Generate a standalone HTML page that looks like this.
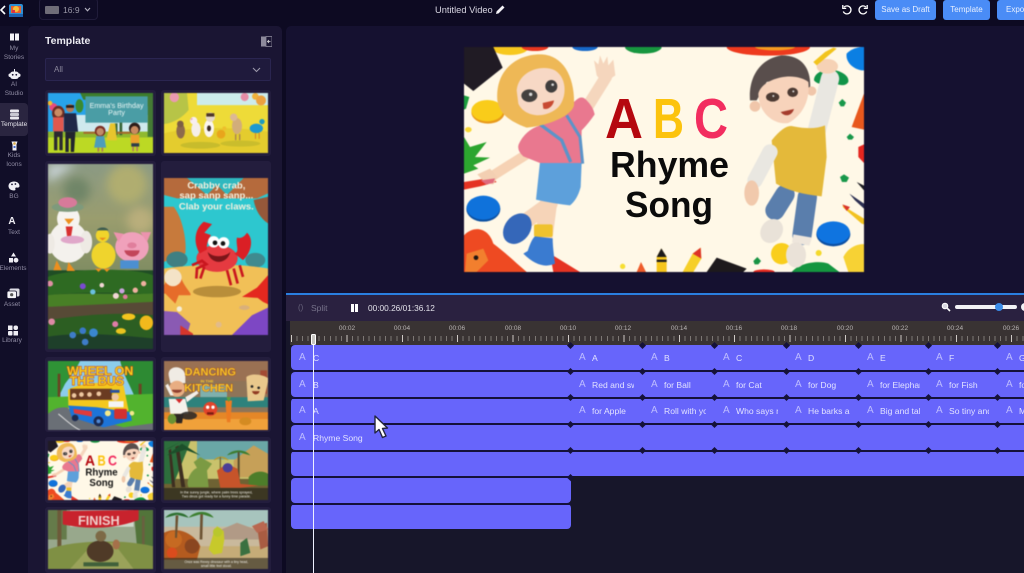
<!DOCTYPE html>
<html lang="en"><head><meta charset="utf-8"><title>Untitled Video</title>
<style>
*{box-sizing:border-box;margin:0;padding:0}
html,body{width:1024px;height:573px;overflow:hidden;background:#0d0a22;font-family:"Liberation Sans",sans-serif}
.a{position:absolute}
#root{position:relative;width:1024px;height:573px;overflow:hidden;background:#0d0a22}
.t{position:absolute;white-space:nowrap}
.nav{position:absolute;left:0;width:28px;text-align:center;color:#8f8ba3;font-size:6.5px;line-height:9.3px}
.btn{position:absolute;top:0;height:20px;background:#4a8cf6;border-radius:3px;color:#e8f0ff;font-size:8px;line-height:20px;text-align:center;overflow:hidden}
.card{position:absolute;background:#231d3d;border-radius:3px}
.th{position:absolute;display:block;overflow:hidden;filter:blur(.45px)}
.row{position:absolute;left:291px;height:25px;background:#6765fb;border-radius:4px 0 0 4px}
.ln{position:absolute;height:2px;background:#15123a}
.dm{position:absolute;width:5px;height:5px;margin:.5px;background:#15123a;transform:rotate(45deg)}
.ai{position:absolute;color:#bdbcff;font-size:10px;line-height:12px;font-weight:400}
.lb{position:absolute;color:#e2e2ff;font-size:8.6px;line-height:12px;white-space:nowrap;overflow:hidden}
.rl{position:absolute;top:324px;color:#b9b5b4;font-size:6.5px;line-height:9px;width:24px;text-align:center}
</style></head><body><div id="root">

<svg width="0" height="0" style="position:absolute"><defs>
<symbol id="abcart" viewBox="12 20 1200 675" preserveAspectRatio="none">
<rect x="12" y="20" width="1200" height="675" fill="#fff8e7"/>
<ellipse cx="150" cy="22" rx="55" ry="22" fill="#f7c81e"/><ellipse cx="225" cy="20" rx="40" ry="12" fill="#e8371f"/>
<ellipse cx="375" cy="20" rx="38" ry="12" fill="#1668c8"/><ellipse cx="550" cy="20" rx="55" ry="20" fill="#17963f"/>
<ellipse cx="925" cy="20" rx="125" ry="26" fill="#ee3a1e"/><ellipse cx="945" cy="20" rx="60" ry="10" fill="#f59c20"/>
<path d="M12 20H100L128 82L40 152L12 130Z" fill="#201b24"/>
<ellipse cx="84" cy="216" rx="50" ry="34" fill="#e89a1c"/><ellipse cx="82" cy="211" rx="48" ry="32" fill="#f9cc1a"/>
<path d="M12 165L28 170L18 205L12 208Z" fill="#1b9e3e"/><ellipse cx="25" cy="268" rx="10" ry="8" fill="#f7d634"/>
<path d="M12 290L30 320L80 305L45 350L90 352L40 375L55 385L12 400Z" fill="#2ca52f"/>
<path d="M12 425L95 412L110 425L60 438L12 448Z" fill="#e53322"/>
<ellipse cx="70" cy="506" rx="51" ry="38" fill="#0b4fa0"/><ellipse cx="70" cy="502" rx="50" ry="36" fill="#0f72db"/>
<path d="M12 585C40 555 85 560 100 610C140 640 170 670 200 695H12Z" fill="#ee4a22"/>
<path d="M20 640L70 625L85 660L50 695H15Z" fill="#f27f2e"/><circle cx="48" cy="652" r="7" fill="#1f1613"/>
<path d="M270 640L360 695H280Z" fill="#e53322"/>
<path d="M530 695L543 665L558 695Z" fill="#ee5b2a"/><circle cx="488" cy="678" r="8" fill="#f7df32"/>
<path d="M590 695V650L604 624L620 650V695Z" fill="#f6c51b"/><path d="M590 650L604 624L620 650Z" fill="#1c1a1c"/><rect x="590" y="658" width="30" height="7" fill="#1c1a1c"/>
<path d="M668 695L698 640L722 622L724 655L700 695Z" fill="#f6cf27"/><path d="M698 640L722 622L724 655Z" fill="#dd3327"/>
<path d="M740 695L770 652L860 685L850 695Z" fill="#1d191c"/>
<ellipse cx="912" cy="695" rx="32" ry="8" fill="#e6291e"/>
<path d="M995 695C1020 665 1080 660 1105 670L1138 695Z" fill="#14963f"/>
<path d="M1150 650C1170 610 1212 610 1212 612V695H1165Z" fill="#f7d234"/>
<circle cx="965" cy="640" r="32" fill="#f9ce1c"/><circle cx="1076" cy="638" r="9" fill="#f4d92b"/>
<path d="M880 662L892 650L903 662L895 672L884 672Z" fill="#199444"/>
<ellipse cx="1120" cy="582" rx="51" ry="36" fill="#0c4fa3"/><ellipse cx="1120" cy="577" rx="50" ry="34" fill="#0f74e0"/>
<path d="M1147 495L1212 535V552L1205 550L1150 502Z" fill="#f2c21f"/><path d="M1147 492L1170 500L1160 512Z" fill="#d9332a"/>
<path d="M1168 460L1212 490V505L1185 480Z" fill="#2c2f52"/><path d="M1190 425L1212 436V450Z" fill="#1c1c22"/>
<path d="M1140 410L1152 402L1167 412L1160 425H1146Z" fill="#18984a"/><path d="M1160 290L1170 280L1182 290L1176 298H1165Z" fill="#18984a"/><path d="M1136 187L1147 176L1158 187L1152 198H1142Z" fill="#18984a"/>
<path d="M1195 320L1212 312V368L1195 350Z" fill="#e5261f"/>
<path d="M1175 260L1212 160V268Z" fill="#e8581d"/>
<path d="M1160 40C1180 18 1212 20 1212 20V90C1190 92 1155 70 1160 40Z" fill="#0b7fe3"/>
<path d="M1062 120C1062 100 1085 90 1100 88C1125 85 1170 100 1165 125C1155 140 1140 135 1110 125C1090 130 1075 135 1062 120Z" fill="#119448"/>
<!-- girl -->
<g fill="none" stroke-linecap="round">
<path d="M195 345L95 408" stroke="#f6d2b4" stroke-width="30"/>
<path d="M385 195L438 110" stroke="#f5d6bd" stroke-width="36"/>
<path d="M270 490L180 555" stroke="#f6d4b8" stroke-width="46"/>
<path d="M265 490L252 590" stroke="#f6d4b8" stroke-width="52"/>
</g>
<path d="M410 105L402 60L415 72L420 45L430 70L442 48L445 75L460 58L466 105L430 130Z" fill="#f5d6bd"/>
<path d="M52 402L90 385L112 410L100 432L78 430Z" fill="#f3cfb2"/><path d="M62 420L105 414L100 428L78 432Z" fill="#e06a7d"/>
<ellipse cx="172" cy="565" rx="38" ry="50" transform="rotate(38 172 565)" fill="#3567b9"/>
<rect x="222" y="552" width="56" height="38" rx="6" fill="#efc22e"/>
<path d="M203 632Q215 595 225 588L278 594Q278 620 285 670Q240 690 190 640Z" fill="#3a7bd0"/>
<path d="M240 365H365L362 440Q352 478 330 495Q280 490 228 478Z" fill="#5da0db"/>
<path d="M240 255Q300 225 350 178Q365 165 378 178Q400 200 404 222Q385 250 365 270L363 368H240L190 348Q170 330 176 312Q195 270 240 255Z" fill="#e9788f"/>
<path d="M240 252L305 300L332 365" fill="none" stroke="#5b94c9" stroke-width="10"/><path d="M320 225L360 290L368 370" fill="none" stroke="#5b94c9" stroke-width="9"/>
<path d="M112 180C105 90 170 40 245 42C310 45 345 110 342 195C335 225 270 255 200 262C140 240 118 215 112 180Z" fill="#eeb856"/>
<path d="M170 150C175 95 240 70 285 90C325 115 320 180 290 205C245 240 190 225 175 190Z" fill="#f7d8c5"/>
<ellipse cx="208" cy="166" rx="24" ry="19" fill="#43403f"/><ellipse cx="274" cy="138" rx="18" ry="19" fill="#3f3d3d"/><circle cx="212" cy="162" r="5" fill="#d9d9d9"/><circle cx="278" cy="133" r="4" fill="#d9d9d9"/>
<path d="M248 188L282 180C280 198 262 210 250 205Z" fill="#c84a33"/>
<!-- boy -->
<path d="M1068 280L1110 115" fill="none" stroke="#e9e7e1" stroke-width="55" stroke-linecap="round"/>
<ellipse cx="1102" cy="78" rx="32" ry="22" fill="#f6d2b5"/>
<path d="M1060 65L1095 35L1120 22L1130 25L1098 52L1070 75Z" fill="#f2c41c"/>
<path d="M975 462L945 510" fill="none" stroke="#5a7eac" stroke-width="58" stroke-linecap="round"/>
<path d="M1042 470L1026 585" fill="none" stroke="#5a7eac" stroke-width="58" stroke-linecap="round"/>
<path d="M1000 582L1056 592L1048 616L996 606Z" fill="#eee6dc"/>
<ellipse cx="1008" cy="644" rx="30" ry="38" fill="#eae2d8"/>
<ellipse cx="935" cy="572" rx="32" ry="38" transform="rotate(35 935 572)" fill="#e9e2d8"/>
<path d="M935 300Q975 250 1000 258Q1060 270 1095 255L1100 350L1085 468Q1000 460 948 430Z" fill="#e4b93a"/>
<path d="M930 335L885 420" fill="none" stroke="#e9e7e1" stroke-width="46" stroke-linecap="round"/>
<ellipse cx="875" cy="458" rx="22" ry="38" fill="#f1c9ac"/>
<path d="M870 180C865 110 900 55 965 45C1035 45 1055 95 1050 150L1000 110L920 125L890 180Z" fill="#594e4c"/>
<circle cx="885" cy="198" r="16" fill="#f0c6aa"/><circle cx="1055" cy="152" r="14" fill="#f0c6aa"/>
<path d="M895 160C905 115 1000 90 1045 125C1050 170 1035 220 985 248C945 255 895 220 895 160Z" fill="#f7d3bb"/>
<ellipse cx="938" cy="170" rx="20" ry="14" fill="#4b3a33"/><ellipse cx="998" cy="156" rx="16" ry="14" fill="#4b3a33"/><circle cx="940" cy="167" r="3" fill="#ddd"/><circle cx="1000" cy="153" r="3" fill="#ddd"/>
<path d="M962 215L1002 206C996 226 975 232 962 215Z" fill="#a53b2c"/>
</symbol>
</defs></svg>

<!-- shell -->
<div class="a" style="left:0;top:26px;width:29px;height:547px;background:#110e28"></div>
<div class="a" style="left:28px;top:26px;width:254px;height:547px;background:#1a1533;border-radius:5px 5px 0 0"></div>
<div class="a" style="left:286px;top:26px;width:738px;height:268px;background:#151130;border-radius:5px 0 0 0"></div>

<!-- top bar -->
<svg class="a" style="left:0;top:5px" width="8" height="10" viewBox="0 0 8 10"><path d="M5 1L1 5L5 9" fill="none" stroke="#fff" stroke-width="1.6"/></svg>
<svg class="a" style="left:8px;top:3px" width="16" height="15" viewBox="0 0 16 15"><rect x="1" y="1" width="14" height="13" rx="2" fill="#2e8fd4"/><path d="M3 3h10v7H3z" fill="#e8622e"/><circle cx="8" cy="6" r="3" fill="#f7c03a"/><path d="M1 11h14v3H1z" fill="#1d62b0"/><path d="M4 7h3v3H4z" fill="#d8324a"/></svg>
<div class="a" style="left:39px;top:-2px;width:59px;height:22px;border:1px solid #201c3a;border-radius:4px;background:#0f0c26"></div>
<div class="a" style="left:45px;top:6px;width:14px;height:8px;background:#6f6d78;border-radius:1px"></div>
<div class="t" style="left:63px;top:5px;font-size:8.5px;line-height:11px;color:#9b99a8">16:9</div>
<svg class="a" style="left:84px;top:7px" width="7" height="5" viewBox="0 0 7 5"><path d="M1 1L3.5 3.8L6 1" fill="none" stroke="#b5b3c0" stroke-width="1.1"/></svg>
<div class="t" style="left:435px;top:4px;font-size:9.3px;line-height:12px;color:#d8d6e2">Untitled Video</div>
<svg class="a" style="left:495px;top:4px" width="11" height="11" viewBox="0 0 11 11"><path d="M1 10L1.6 7.4L7.5 1.5L9.5 3.5L3.6 9.4Z" fill="#f4f3f8"/></svg>
<svg class="a" style="left:841px;top:4px" width="12" height="12" viewBox="0 0 12 12"><path d="M3 3.2A4 4 0 1 1 2.3 7.5" fill="none" stroke="#fff" stroke-width="1.3"/><path d="M1.8 1v3.4h3.4" fill="none" stroke="#fff" stroke-width="1.3"/></svg>
<svg class="a" style="left:857px;top:4px" width="12" height="12" viewBox="0 0 12 12"><path d="M9 3.2A4 4 0 1 0 9.7 7.5" fill="none" stroke="#fff" stroke-width="1.3"/><path d="M10.2 1v3.4H6.8" fill="none" stroke="#fff" stroke-width="1.3"/></svg>
<div class="btn" style="left:875px;width:61px">Save as Draft</div>
<div class="btn" style="left:943px;width:47px">Template</div>
<div class="btn" style="left:997px;width:40px;text-align:left;padding-left:9px">Export</div>

<!-- nav rail -->
<div class="a" style="left:0;top:103px;width:28px;height:33px;background:#2a2540;border-radius:0 4px 4px 0"></div>
<svg class="a" style="left:7px;top:33px" width="15" height="8" viewBox="0 0 15 8"><path d="M3 0.5H7V7.5H3ZM8 0.5H12V7.5H8Z" fill="#f4f3f8"/></svg>
<div class="nav" style="top:44px">My<br>Stories</div>
<svg class="a" style="left:7px;top:69px" width="15" height="11" viewBox="0 0 15 11"><rect x="3" y="2.5" width="9" height="7.5" rx="3" fill="#f0eff5"/><rect x="1.5" y="4.5" width="12" height="3.5" rx="1.5" fill="#f0eff5"/><rect x="7" y="0" width="1" height="3" fill="#f0eff5"/><circle cx="5.7" cy="5.8" r=".9" fill="#1a1533"/><circle cx="9.3" cy="5.8" r=".9" fill="#1a1533"/></svg>
<div class="nav" style="top:80px">AI<br>Studio</div>
<svg class="a" style="left:7px;top:109px" width="15" height="11" viewBox="0 0 15 11"><rect x="3" y="0.5" width="9" height="3" rx="1" fill="#e9e8ee"/><rect x="3" y="4" width="9" height="3" rx="1" fill="#c9c8d2"/><rect x="3" y="7.5" width="9" height="3" rx="1" fill="#e9e8ee"/></svg>
<div class="nav" style="top:120px;color:#e4e3ea;left:-1px;width:30px;overflow:hidden">Template</div>
<svg class="a" style="left:8px;top:140px" width="13" height="11" viewBox="0 0 13 11"><path d="M3.5 1.5H9.5L8.5 4.5V10.5H4.5V4.5Z" fill="#f0eff5"/><circle cx="6.5" cy="3.5" r="1.3" fill="#e0b04a"/><path d="M5.5 6h2v2h-2z" fill="#4a6fd0"/></svg>
<div class="nav" style="top:151px">Kids<br>Icons</div>
<svg class="a" style="left:7px;top:181px" width="14" height="10" viewBox="0 0 14 10"><path d="M7 0.5C10.5 .5 12.5 2.6 12.5 5C12.5 6.5 11 6.8 9.7 6.5C8.5 6.3 8 7.2 8.4 8.1C8.7 9 8 9.5 7 9.5C3.8 9.5 1.5 7.6 1.5 5C1.5 2.4 3.8 .5 7 .5Z" fill="#f0eff5"/><circle cx="5" cy="3.4" r=".9" fill="#1a1533"/><circle cx="8.4" cy="3" r=".9" fill="#1a1533"/></svg>
<div class="nav" style="top:192px">BG</div>
<div class="t" style="left:0;width:24px;text-align:center;top:216px;font-size:10px;line-height:12px;color:#efeef4;font-weight:700">A</div>
<div class="nav" style="top:228px">Text</div>
<svg class="a" style="left:6px;top:252px" width="15" height="11" viewBox="0 0 15 11"><path d="M7.5 0.5L10 4.5H5Z" fill="#efeef4"/><rect x="3" y="6" width="4" height="4.5" fill="#efeef4"/><circle cx="10" cy="8.2" r="2.4" fill="#efeef4"/></svg>
<div class="nav" style="top:264px;left:-2px;width:30px;overflow:hidden">Elements</div>
<svg class="a" style="left:6px;top:288px" width="15" height="11" viewBox="0 0 15 11"><rect x="3.5" y="0.5" width="10" height="8" rx="1.5" fill="#dcdbe3"/><rect x="1" y="3" width="9.5" height="7.5" rx="1.5" fill="#f5f4f8" stroke="#110e28" stroke-width=".8"/><circle cx="5.7" cy="6.7" r="1.6" fill="#555"/></svg>
<div class="nav" style="top:300px;left:-2px">Asset</div>
<svg class="a" style="left:7px;top:325px" width="12" height="11" viewBox="0 0 12 11"><rect x="1" y="0.5" width="4.5" height="4.5" fill="#efeef4"/><rect x="6.5" y="0.5" width="4.5" height="4.5" rx="2" fill="#efeef4"/><rect x="1" y="6" width="4.5" height="4.5" rx="1" fill="#efeef4"/><rect x="6.5" y="6" width="4.5" height="4.5" fill="#efeef4"/></svg>
<div class="nav" style="top:336px;left:-2px">Library</div>

<!-- template panel -->
<div class="t" style="left:45px;top:35px;font-size:10.5px;line-height:13px;font-weight:700;color:#ecebf2">Template</div>
<svg class="a" style="left:261px;top:36px" width="11" height="11" viewBox="0 0 11 11"><rect x="0" y="0.5" width="5" height="10" fill="#8d8a9c"/><rect x="5" y="0.5" width="6" height="10" fill="none" stroke="#8d8a9c" stroke-width=".8"/><path d="M9.5 5.5H6.5M8 4L6.5 5.5L8 7" fill="none" stroke="#ddd" stroke-width=".8"/></svg>
<div class="a" style="left:45px;top:58px;width:226px;height:23px;background:#1f1a3c;border:1px solid #2a2550;border-radius:2px"></div>
<div class="t" style="left:54px;top:64px;font-size:8px;line-height:11px;color:#8b889c">All</div>
<svg class="a" style="left:252px;top:67px" width="9" height="6" viewBox="0 0 9 6"><path d="M1 1L4.5 4.5L8 1" fill="none" stroke="#9b98aa" stroke-width="1.1"/></svg>

<div class="card" style="left:45px;top:90px;width:111px;height:66px"></div>
<div class="card" style="left:161px;top:90px;width:110px;height:66px"></div>
<div class="card" style="left:45px;top:161px;width:111px;height:191px"></div>
<div class="card" style="left:161px;top:161px;width:110px;height:191px"></div>
<div class="card" style="left:45px;top:357px;width:111px;height:75px"></div>
<div class="card" style="left:161px;top:357px;width:110px;height:75px"></div>
<div class="card" style="left:45px;top:437px;width:111px;height:66px"></div>
<div class="card" style="left:161px;top:437px;width:110px;height:66px"></div>
<div class="card" style="left:45px;top:507px;width:111px;height:66px"></div>
<div class="card" style="left:161px;top:507px;width:110px;height:66px"></div>

<!-- thumb 1 -->
<svg class="th" style="left:48px;top:93px" width="105" height="60" viewBox="144 280 314 178" preserveAspectRatio="none">
<rect x="144" y="280" width="314" height="120" fill="#28a3ea"/><rect x="225" y="345" width="225" height="50" fill="#cfe9ee"/>
<rect x="144" y="395" width="314" height="63" fill="#bcd924"/>
<path d="M144 395H458V412H144Z" fill="#8fb92f"/>
<path d="M240 280H458V320H435V300H250Z" fill="#3d7c2c"/><rect x="442" y="290" width="16" height="120" fill="#447a34"/><ellipse cx="238" cy="318" rx="12" ry="20" fill="#3b8a30"/>
<circle cx="160" cy="322" r="12" fill="#e84b7c"/><circle cx="150" cy="310" r="7" fill="#f4b92d"/>
<rect x="342" y="370" width="10" height="35" fill="#3a6a3a"/><rect x="358" y="365" width="8" height="40" fill="#356435"/><rect x="250" y="395" width="40" height="6" fill="#a5672c"/><rect x="350" y="395" width="40" height="6" fill="#a5672c"/><path d="M318 420L330 370H345L350 420Z" fill="#e7c52d"/>
<rect x="256" y="290" width="186" height="78" fill="#4a9da5"/>
<text x="349" y="325" font-size="21.5" fill="#eaf6f5" text-anchor="middle" font-family="Liberation Sans,sans-serif">Emma's Birthday</text>
<text x="349" y="346" font-size="21.5" fill="#eaf6f5" text-anchor="middle" font-family="Liberation Sans,sans-serif">Party</text>
<ellipse cx="175" cy="340" rx="19" ry="22" fill="#6b2d23"/><circle cx="175" cy="338" r="12" fill="#c98b64"/><rect x="159" y="352" width="32" height="42" fill="#e0584f"/><path d="M162 394H188V450H178V410H172V450H162Z" fill="#2a2a30"/>
<circle cx="210" cy="325" r="12" fill="#b57a55"/><path d="M198 316H222V324H198Z" fill="#2a1c18"/><path d="M192 340L228 340L234 395H192Z" fill="#1f2747"/><path d="M196 395H226L222 455H212V415H206V455H196Z" fill="#22252e"/>
<circle cx="300" cy="393" r="16" fill="#7a2c22"/><circle cx="300" cy="395" r="11" fill="#c28c69"/><path d="M288 408H312L318 442H282Z" fill="#4c9dbb"/><rect x="292" y="442" width="5" height="12" fill="#b07a55"/><rect x="304" y="442" width="5" height="12" fill="#b07a55"/>
<circle cx="403" cy="385" r="17" fill="#2c1d19"/><circle cx="403" cy="390" r="12" fill="#c98a60"/><rect x="391" y="404" width="26" height="25" fill="#eda12c"/><rect x="393" y="429" width="24" height="10" fill="#2f3d4a"/><rect x="396" y="439" width="5" height="14" fill="#b57d57"/><rect x="408" y="439" width="5" height="14" fill="#b57d57"/>
</svg>

<!-- thumb 2 -->
<svg class="th" style="left:164px;top:93px" width="104" height="60" viewBox="491 280 312 178" preserveAspectRatio="none">
<rect x="491" y="280" width="312" height="178" fill="#eedb38"/><rect x="590" y="280" width="213" height="36" fill="#cdecec"/>
<path d="M491 280H560L565 330C540 360 510 370 491 372Z" fill="#b7c447"/>
<path d="M491 400C560 380 720 380 803 395V458H491Z" fill="#e4cc2e"/>
<ellipse cx="600" cy="435" rx="60" ry="10" fill="#c7bc2c"/><ellipse cx="720" cy="430" rx="60" ry="9" fill="#cabd2c"/>
<circle cx="522" cy="293" r="14" fill="#ea9ab0"/><circle cx="733" cy="292" r="12" fill="#e68ca6"/><circle cx="765" cy="290" r="10" fill="#eeb13b"/><circle cx="782" cy="302" r="15" fill="#eca13f"/>
<ellipse cx="541" cy="393" rx="13" ry="22" fill="#8d6a4c"/><circle cx="540" cy="372" r="10" fill="#7d5e45"/>
<ellipse cx="587" cy="388" rx="14" ry="22" fill="#f5efe9"/><circle cx="580" cy="362" r="11" fill="#f7eef1"/><path d="M571 354L578 356L572 362Z" fill="#eb9fb6"/>
<ellipse cx="626" cy="385" rx="15" ry="26" fill="#faf5ee"/><circle cx="630" cy="352" r="14" fill="#e5d8c8"/><path d="M618 340H642V350H618Z" fill="#4e3528"/><ellipse cx="626" cy="385" rx="6" ry="9" fill="#3a2a22"/>
<ellipse cx="662" cy="402" rx="13" ry="13" fill="#e8a51c"/><circle cx="672" cy="385" r="6" fill="#eebf2b"/>
<ellipse cx="710" cy="378" rx="15" ry="24" fill="#d2ad7a"/><circle cx="700" cy="352" r="11" fill="#dcb894"/><rect x="704" y="402" width="4" height="18" fill="#a78350"/><rect x="716" y="402" width="4" height="18" fill="#a78350"/>
<ellipse cx="768" cy="385" rx="20" ry="14" fill="#1c99cf"/><circle cx="785" cy="365" r="8" fill="#1b9bc0"/><rect x="764" y="398" width="3" height="18" fill="#d88128"/><rect x="775" y="398" width="3" height="18" fill="#d88128"/>
</svg>

<!-- thumb 3 tall -->
<svg class="th" style="left:48px;top:164px" width="105" height="185" viewBox="144 -110 314 557" preserveAspectRatio="none">
<defs><linearGradient id="g3" x1="0" y1="0" x2="0" y2="1"><stop offset="0" stop-color="#8b9a84"/><stop offset=".5" stop-color="#9a9d6e"/><stop offset="1" stop-color="#7f8c62"/></linearGradient><filter id="bk"><feGaussianBlur stdDeviation="14"/></filter></defs>
<rect x="144" y="-110" width="314" height="330" fill="url(#g3)"/>
<g filter="url(#bk)"><path d="M144 -110H230L170 -70L144 -50Z" fill="#c6d0d2"/><circle cx="380" cy="-50" r="60" fill="#b0ad70"/><circle cx="230" cy="-30" r="40" fill="#6f8568"/><circle cx="420" cy="60" r="40" fill="#b9ae7c"/></g>
<rect x="144" y="210" width="314" height="237" fill="#1f4d24"/>
<path d="M144 230C200 205 400 200 458 225V285C380 275 220 275 144 285Z" fill="#2e6a22"/>
<path d="M144 285C220 275 380 285 458 280V310C380 320 220 325 144 320Z" fill="#487f26"/>
<path d="M144 320L458 305V345L300 360H144Z" fill="#574a36"/>
<path d="M144 360C240 345 360 335 458 345V447H144Z" fill="#2c5e22"/>
<path d="M144 410C240 395 360 405 458 415V447H144Z" fill="#1e3f2a"/>
<ellipse cx="205" cy="125" rx="58" ry="62" fill="#f4f1ed"/><ellipse cx="205" cy="55" rx="34" ry="38" fill="#f6f3ef"/><ellipse cx="150" cy="130" rx="14" ry="30" fill="#eeeae4"/><ellipse cx="258" cy="125" rx="18" ry="34" fill="#eeeae4"/>
<ellipse cx="203" cy="20" rx="48" ry="14" fill="#7e9a7c"/><ellipse cx="203" cy="6" rx="28" ry="16" fill="#d77a9a"/>
<path d="M193 55L222 55L206 72Z" fill="#ec8f1c"/><path d="M197 78H218L213 108H201Z" fill="#d83030"/>
<ellipse cx="217" cy="118" rx="35" ry="12" fill="#e0a7c9"/>
<path d="M170 180L185 210H160ZM205 185L225 212H200Z" fill="#ee8f1e"/>
<ellipse cx="310" cy="165" rx="36" ry="40" fill="#efd42d"/><circle cx="307" cy="105" r="20" fill="#f0d42b"/><path d="M290 90C295 78 320 78 325 90Z" fill="#3d5c50"/><path d="M297 112L318 112L307 120Z" fill="#ec8a1a"/><path d="M285 205H305L295 215ZM310 205H330L320 215Z" fill="#ee8f1e"/>
<ellipse cx="395" cy="140" rx="50" ry="45" fill="#f0a1bb"/><path d="M340 95L370 100L355 125ZM420 95L452 95L440 125Z" fill="#ec93ae"/><path d="M372 150H418C415 175 378 175 372 150Z" fill="#c2455a"/><rect x="360" y="180" width="55" height="25" fill="#4c8fd0"/><ellipse cx="395" cy="135" rx="14" ry="9" fill="#e07e9c"/>
<g fill="#f2d6d6"><circle cx="150" cy="250" r="9" fill="#e08fa5"/><circle cx="305" cy="255" r="7"/><circle cx="347" cy="287" r="9"/><circle cx="375" cy="290" r="7" fill="#e07a9d"/><circle cx="405" cy="270" r="8" fill="#f0b0a0"/><circle cx="430" cy="250" r="8" fill="#f0b0a0"/></g>
<circle cx="248" cy="258" r="9" fill="#7a4ad0"/><circle cx="278" cy="275" r="8" fill="#6ac0e0"/><circle cx="365" cy="272" r="8" fill="#c9a3dd"/>
<ellipse cx="385" cy="350" rx="20" ry="10" fill="#f4c41e"/><ellipse cx="438" cy="368" rx="20" ry="22" fill="#f2b91c"/><ellipse cx="362" cy="393" rx="15" ry="9" fill="#e9c31f"/>
<circle cx="280" cy="398" r="13" fill="#3a86d0"/><circle cx="248" cy="392" r="10" fill="#3a78c8"/><circle cx="218" cy="405" r="10" fill="#3e7cc8"/><circle cx="255" cy="426" r="10" fill="#3e7cc8"/><circle cx="345" cy="372" r="9" fill="#df7ca6"/><circle cx="155" cy="365" r="10" fill="#df8aa6"/>
</svg>

<!-- thumb 4 crab -->
<svg class="th" style="left:164px;top:178px" width="104" height="157" viewBox="491 -66 312 470" preserveAspectRatio="none">
<rect x="491" y="-66" width="312" height="280" fill="#2dc7cf"/>
<path d="M491 -66H803V-20L770 -5H530L491 -15Z" fill="#b56a3c"/><path d="M560 -66L620 -15L650 -45L680 -15L730 -66Z" fill="#2fb8bf"/>
<path d="M491 20H520C545 50 560 120 555 160L491 185Z" fill="#c77a3c"/><path d="M760 0L803 -10V70C780 55 765 30 760 0Z" fill="#96583a"/>
<ellipse cx="530" cy="178" rx="32" ry="24" fill="#3f7f82"/><ellipse cx="765" cy="180" rx="30" ry="22" fill="#3f8a8f"/>
<path d="M491 205C600 190 720 190 803 205V404H491Z" fill="#f1c057"/>
<ellipse cx="650" cy="274" rx="72" ry="17" fill="#b98e3a"/>
<text x="648" y="-34" font-size="28.5" font-weight="700" fill="#f5f1df" text-anchor="middle" font-family="Liberation Sans,sans-serif">Crabby crab,</text>
<text x="648" y="-4" font-size="28.5" font-weight="700" fill="#f5f1df" text-anchor="middle" font-family="Liberation Sans,sans-serif">sap sanp sanp...</text>
<text x="648" y="28" font-size="28.5" font-weight="700" fill="#f5f1df" text-anchor="middle" font-family="Liberation Sans,sans-serif">Clab your claws.</text>
<ellipse cx="650" cy="175" rx="62" ry="40" fill="#e53a40"/>
<path d="M598 160C580 130 580 90 610 65L635 72L612 98L632 105C622 120 618 135 620 148Z" fill="#da1f25"/>
<path d="M702 160C720 155 705 135 710 112C725 118 735 105 740 98C760 115 755 155 728 180Z" fill="#da1f25"/>
<path d="M575 195L605 182L618 192L590 205L588 235M680 210L692 255M700 205L712 250M718 195L728 230M612 200L600 235" fill="none" stroke="#c9171f" stroke-width="8"/>
<circle cx="640" cy="125" r="17" fill="#fff"/><circle cx="670" cy="128" r="17" fill="#fff"/><circle cx="644" cy="128" r="7" fill="#111"/><circle cx="668" cy="130" r="7" fill="#111"/>
<path d="M622 155C640 175 675 170 690 155C680 195 630 195 622 155Z" fill="#7c1519"/>
<path d="M510 220L535 212L545 240C560 270 575 280 570 285H535L525 310L495 280H491V255Z" fill="#e66c2a"/><circle cx="518" cy="232" r="26" fill="#f4e3c7"/>
<path d="M803 225L770 262L725 290L772 293L788 305L803 312Z" fill="#e4281f"/>
<path d="M491 332L530 335L570 370L560 404H491Z" fill="#8a5ab3"/><path d="M540 375L578 400V404H540Z" fill="#d7362c"/>
<path d="M695 404L755 345L803 322V404Z" fill="#7d47c4"/>
<ellipse cx="732" cy="322" rx="16" ry="7" fill="#d9b07a"/><circle cx="537" cy="326" r="8" fill="#f5eed8"/><circle cx="655" cy="373" r="9" fill="#e2bb8a"/>
</svg>

<!-- thumb 5 wheels -->
<svg class="th" style="left:48px;top:361px" width="105" height="69" viewBox="144 -88 314 206" preserveAspectRatio="none">
<rect x="144" y="-88" width="314" height="206" fill="#8ccdec"/>
<path d="M144 -88H458V-60H390L370 -88H240L225 -60L195 -20L165 40H144Z" fill="#2f9336"/><path d="M360 -88H458V50L410 40C400 0 370 -40 360 -88Z" fill="#2d8a33"/>
<rect x="173" y="-50" width="8" height="70" fill="#6a4423"/><rect x="415" y="-20" width="9" height="60" fill="#6a4423"/>
<path d="M144 20L458 10V118H144Z" fill="#52b32e"/>
<path d="M144 118L144 70C180 35 220 50 300 90L370 110L458 98V118Z" fill="#6a6f76"/><path d="M175 70C200 90 220 110 240 118" fill="none" stroke="#dcdcdc" stroke-width="3"/>
<path d="M204 -2C240 -25 340 -30 370 -15L385 60L300 90L205 55Z" fill="#f3c81e"/>
<path d="M204 45L290 50L390 65L395 90L310 110L215 80Z" fill="#1d74d8"/><path d="M220 55L275 62V78L222 68Z" fill="#e03a3a"/>
<path d="M210 -5H335V28H210Z" fill="#6a3b22"/><g fill="#eec7a0"><circle cx="222" cy="15" r="7"/><circle cx="244" cy="12" r="7"/><circle cx="268" cy="12" r="7"/><circle cx="296" cy="10" r="7"/></g>
<circle cx="345" cy="20" r="11" fill="#efc6a2"/><rect x="330" y="-2" width="28" height="9" fill="#2a4fa0"/><rect x="325" y="32" width="45" height="18" fill="#f4f4f4"/>
<rect x="342" y="55" width="38" height="30" rx="5" fill="#d33030"/><circle cx="323" cy="68" r="9" fill="#f4e98a"/><circle cx="395" cy="68" r="7" fill="#f4e98a"/>
<circle cx="225" cy="82" r="10" fill="#1c2a50"/><circle cx="295" cy="92" r="15" fill="#1c2a50"/><circle cx="295" cy="92" r="6" fill="#5189d4"/>
<text x="300" y="-46" font-size="37" font-weight="700" fill="#f7cf1c" stroke="#c33b1b" stroke-width="3" paint-order="stroke" text-anchor="middle" font-family="Liberation Sans,sans-serif">WHEEL ON</text>
<text x="290" y="-16" font-size="37" font-weight="700" fill="#f7cf1c" stroke="#c33b1b" stroke-width="3" paint-order="stroke" text-anchor="middle" font-family="Liberation Sans,sans-serif">THE BUS</text>
</svg>

<!-- thumb 6 dancing -->
<svg class="th" style="left:164px;top:361px" width="104" height="69" viewBox="491 -88 312 206" preserveAspectRatio="none">
<rect x="491" y="-88" width="312" height="206" fill="#8e7458"/>
<rect x="491" y="-88" width="312" height="60" fill="#9a7153"/><rect x="600" y="-15" width="80" height="35" fill="#7fb0ad"/><rect x="491" y="20" width="312" height="30" fill="#2e827c"/>
<path d="M491 65H803V118H491Z" fill="#e58727"/><path d="M491 85H803V118H491Z" fill="#f0a13a"/>
<rect x="780" y="-60" width="20" height="70" fill="#a24a33"/>
<path d="M505 -45C500 -75 550 -80 555 -45V-22H510Z" fill="#f0ebe4"/>
<circle cx="530" cy="-5" r="24" fill="#e8ad82"/><path d="M515 -2H545C545 10 515 10 515 -2Z" fill="#8e3f2f"/>
<path d="M505 25L555 25L565 70H510Z" fill="#f5f2ec"/><path d="M525 25H548L537 38Z" fill="#d4282a"/>
<path d="M510 15L495 -15L503 -20L520 15M555 20L590 0L595 8L560 35" fill="#f2eee8"/>
<path d="M520 70H550L545 98H528Z" fill="#2e2622"/><ellipse cx="565" cy="75" rx="25" ry="12" fill="#2d2b29" opacity=".9"/>
<circle cx="630" cy="55" r="21" fill="#e2442a"/><circle cx="622" cy="50" r="5" fill="#fff"/><circle cx="638" cy="50" r="5" fill="#fff"/><path d="M620 65H640V72H620Z" fill="#7a1c12"/>
<path d="M675 30L695 30L690 95L680 95Z" fill="#ec7b22"/><path d="M678 20H692L685 35Z" fill="#5ba03a"/>
<path d="M738 -40C755 -55 795 -45 805 -35L790 30L742 32Z" fill="#e9c88c"/><circle cx="755" cy="-12" r="4" fill="#222"/><circle cx="775" cy="-8" r="4" fill="#222"/><path d="M755 2H778C775 15 758 15 755 2Z" fill="#903a22"/>
<ellipse cx="515" cy="85" rx="13" ry="15" fill="#6a9232"/><ellipse cx="735" cy="92" rx="18" ry="12" fill="#d48b22"/>
<text x="630" y="-45" font-size="33" font-weight="700" fill="#f7c72b" stroke="#a5461b" stroke-width="2.4" paint-order="stroke" text-anchor="middle" font-family="Liberation Sans,sans-serif">DANCING</text>
<text x="620" y="-24" font-size="12" font-weight="700" fill="#f7c72b" text-anchor="middle" font-family="Liberation Sans,sans-serif">IN THE</text>
<text x="625" y="3" font-size="33" font-weight="700" fill="#f7c72b" stroke="#a5461b" stroke-width="2.4" paint-order="stroke" text-anchor="middle" font-family="Liberation Sans,sans-serif">KITCHEN</text>
</svg>

<!-- thumb 7 abc -->
<svg class="th" style="left:48px;top:441px" width="105" height="59" viewBox="0 0 105 59" preserveAspectRatio="none">
<use href="#abcart" x="0" y="0" width="105" height="59"/>
<text x="37" y="24.5" font-size="15" font-weight="700" fill="#b5080f" textLength="10" lengthAdjust="spacingAndGlyphs" font-family="Liberation Sans,sans-serif">A</text>
<text x="49.5" y="24.5" font-size="15" font-weight="700" fill="#fcc30d" textLength="8.2" lengthAdjust="spacingAndGlyphs" font-family="Liberation Sans,sans-serif">B</text>
<text x="60" y="24.5" font-size="15" font-weight="700" fill="#f22d5f" textLength="9" lengthAdjust="spacingAndGlyphs" font-family="Liberation Sans,sans-serif">C</text>
<text x="53.5" y="34.5" font-size="9.7" font-weight="700" fill="#111" text-anchor="middle" font-family="Liberation Sans,sans-serif">Rhyme</text>
<text x="53.5" y="45" font-size="9.7" font-weight="700" fill="#111" text-anchor="middle" font-family="Liberation Sans,sans-serif">Song</text>
</svg>

<!-- thumb 8 dino -->
<svg class="th" style="left:164px;top:441px" width="104" height="59" viewBox="491 152 312 176" preserveAspectRatio="none">
<rect x="491" y="152" width="312" height="176" fill="#c9c26c"/><rect x="590" y="152" width="213" height="55" fill="#6aa7a6"/>
<path d="M700 210L760 165L803 190V260H700Z" fill="#c6a058"/>
<rect x="491" y="265" width="312" height="63" fill="#6e6233"/>
<path d="M491 152H570L560 180L520 280H491Z" fill="#2d6e3c"/>
<path d="M535 165L555 290H543L525 170ZM512 175L525 290H515L505 180Z" fill="#3d2e20"/>
<path d="M500 195L545 160L600 195L555 178ZM491 180L540 155L510 172Z" fill="#1c4f2a"/>
<path d="M680 195C695 175 735 175 750 195L715 185Z" fill="#3d7d30"/><rect x="712" y="185" width="6" height="85" fill="#574c2c"/>
<path d="M640 210C650 195 675 195 685 210L662 202Z" fill="#b69a30"/><rect x="658" y="200" width="4" height="70" fill="#7a6a30"/>
<path d="M745 260C760 240 790 240 803 250V285H745Z" fill="#4d7d2a"/>
<path d="M580 215L600 200L635 220L620 240L625 290H565C555 275 570 240 590 232Z" fill="#7b9a43"/>
<path d="M650 240L680 220L712 235L720 280L775 285L720 292H660Z" fill="#c6542a"/>
<ellipse cx="682" cy="232" rx="15" ry="14" fill="#4b3f96"/>
<rect x="491" y="292" width="312" height="36" fill="#2c2a1e" opacity=".75"/>
<text x="648" y="308" font-size="10.5" fill="#f1efe6" text-anchor="middle" font-family="Liberation Sans,sans-serif">In the sunny jungle, where palm trees sprayed,</text>
<text x="648" y="321" font-size="10.5" fill="#f1efe6" text-anchor="middle" font-family="Liberation Sans,sans-serif">Two dinos got ready for a funny time parade.</text>
</svg>

<!-- thumb 9 finish -->
<svg class="th" style="left:48px;top:510px" width="105" height="59" viewBox="144 362 314 176" preserveAspectRatio="none">
<rect x="144" y="362" width="314" height="176" fill="#98a88c"/><rect x="210" y="362" width="190" height="50" fill="#ced9cb"/>
<path d="M144 362H200V450H144Z" fill="#657b4a"/><path d="M400 362H458V470H410Z" fill="#52743a"/>
<rect x="172" y="362" width="12" height="130" fill="#6d5a3a"/><rect x="425" y="380" width="8" height="100" fill="#6a5f40"/>
<path d="M144 480C220 450 380 450 458 470V538H144Z" fill="#7f9044"/>
<path d="M210 538L280 460H340L400 538Z" fill="#9aa25a"/>
<path d="M188 365L415 362V392C340 420 260 420 188 405Z" fill="#c8232d"/>
<ellipse cx="300" cy="485" rx="40" ry="32" fill="#4f3a27"/><circle cx="302" cy="440" r="16" fill="#7d6a46"/><rect x="250" y="518" width="105" height="12" fill="#40603a"/>
<ellipse cx="348" cy="465" rx="11" ry="15" fill="#a5704a"/>
<text x="296" y="407" font-size="38" font-weight="700" fill="#f0d0cc" text-anchor="middle" font-family="Liberation Sans,sans-serif">FINISH</text>
</svg>

<!-- thumb 10 dino2 -->
<svg class="th" style="left:164px;top:510px" width="104" height="59" viewBox="491 362 312 176" preserveAspectRatio="none">
<rect x="491" y="362" width="312" height="176" fill="#c9b99c"/><rect x="491" y="362" width="312" height="50" fill="#a7c4bd"/>
<path d="M640 430L710 400L780 425V450H640Z" fill="#b19a86"/>
<rect x="491" y="470" width="312" height="68" fill="#c5ac78"/>
<path d="M491 430C530 410 580 430 600 470L590 510H491Z" fill="#b45b1f"/>
<circle cx="520" cy="450" r="25" fill="#c66a22"/><circle cx="575" cy="470" r="22" fill="#8a4620"/><circle cx="515" cy="490" r="16" fill="#da4c1d"/>
<path d="M526 378L534 378L530 445H524Z" fill="#6c5232"/><path d="M495 385C510 365 550 365 565 385L530 376Z" fill="#2d7030"/>
<path d="M600 372L608 372L606 450H598Z" fill="#6c5232"/><path d="M565 385C585 362 625 362 640 385L603 374Z" fill="#3d8030"/>
<path d="M640 430L650 410L670 425L672 450L665 490L640 495L625 480Z" fill="#c7c92b"/><circle cx="652" cy="428" r="14" fill="#b9c72c"/>
<path d="M720 460L740 445L750 490L720 500Z" fill="#3a7040"/>
<path d="M770 410L800 400L803 470L780 480Z" fill="#a85c42"/><path d="M755 410L790 395L803 420L770 430Z" fill="#b96750"/>
<rect x="491" y="505" width="312" height="33" fill="#2b2a22" opacity=".62"/>
<text x="648" y="520" font-size="10" fill="#f1efe6" text-anchor="middle" font-family="Liberation Sans,sans-serif">Once was Rexey dinosaur with a tiny head,</text>
<text x="648" y="532" font-size="10" fill="#f1efe6" text-anchor="middle" font-family="Liberation Sans,sans-serif">small little feet stood.</text>
</svg>

<!-- preview -->
<svg class="a" style="left:464px;top:47px;filter:blur(.5px)" width="400" height="225" viewBox="0 0 400 225" preserveAspectRatio="none">
<use href="#abcart" x="0" y="0" width="400" height="225"/>
</svg>
<svg class="a" style="left:464px;top:47px;filter:blur(.25px)" width="400" height="225" viewBox="0 0 400 225">
<text x="141" y="91" font-size="57" font-weight="700" fill="#b5080f" textLength="38" lengthAdjust="spacingAndGlyphs" font-family="Liberation Sans,sans-serif">A</text>
<text x="189" y="91" font-size="57" font-weight="700" fill="#fcc30d" textLength="31" lengthAdjust="spacingAndGlyphs" font-family="Liberation Sans,sans-serif">B</text>
<text x="230" y="91" font-size="57" font-weight="700" fill="#f22d5f" textLength="34" lengthAdjust="spacingAndGlyphs" font-family="Liberation Sans,sans-serif">C</text>
<text x="146" y="130" font-size="36.5" font-weight="700" fill="#0b0b0b" textLength="119" lengthAdjust="spacingAndGlyphs" font-family="Liberation Sans,sans-serif">Rhyme</text>
<text x="161" y="170" font-size="36.5" font-weight="700" fill="#0b0b0b" textLength="88" lengthAdjust="spacingAndGlyphs" font-family="Liberation Sans,sans-serif">Song</text>
</svg>

<!-- timeline -->
<div class="a" style="left:286px;top:294px;width:738px;height:279px;background:#17162a"></div>
<div class="a" style="left:286px;top:293px;width:738px;height:2px;background:#2a7fe0"></div>
<div class="a" style="left:286px;top:295px;width:738px;height:26px;background:#2a2140"></div>
<div class="t" style="left:298px;top:303px;font-size:8px;line-height:10px;color:#66627a">()</div>
<div class="t" style="left:311px;top:303px;font-size:8.5px;line-height:11px;color:#77738a">Split</div>
<div class="a" style="left:351px;top:304px;width:3px;height:8px;background:#fff"></div>
<div class="a" style="left:355px;top:304px;width:3px;height:8px;background:#fff"></div>
<div class="t" style="left:368px;top:303px;font-size:8.3px;line-height:11px;color:#e3e2ea">00:00.26/01:36.12</div>
<svg class="a" style="left:941px;top:302px" width="10" height="10" viewBox="0 0 10 10"><circle cx="4" cy="4" r="2.8" fill="#d8d8e0" stroke="#fff" stroke-width="1"/><path d="M6.3 6.3L9 9" stroke="#fff" stroke-width="1.6"/></svg>
<div class="a" style="left:955px;top:305px;width:62px;height:4px;background:#f2f2f5;border-radius:2px"></div>
<div class="a" style="left:995px;top:303px;width:8px;height:8px;background:#3a8be8;border-radius:50%"></div>
<div class="a" style="left:1021px;top:303px;width:8px;height:8px;background:#f2f2f5;border-radius:50%"></div>

<div class="a" style="left:290px;top:321px;width:734px;height:24px;background:#393333"></div>
<div class="a" style="left:291px;top:336px;width:733px;height:5px;background:repeating-linear-gradient(90deg,#7d7875 0,#7d7875 1px,transparent 1px,transparent 5.54px)"></div>
<div class="a" style="left:291px;top:335px;width:733px;height:7px;background:repeating-linear-gradient(90deg,#cfcac6 0,#cfcac6 1px,transparent 1px,transparent 55.4px)"></div>
<div class="rl" style="left:335px">00:02</div><div class="rl" style="left:390px">00:04</div><div class="rl" style="left:445px">00:06</div><div class="rl" style="left:501px">00:08</div><div class="rl" style="left:556px">00:10</div><div class="rl" style="left:611px">00:12</div><div class="rl" style="left:667px">00:14</div><div class="rl" style="left:722px">00:16</div><div class="rl" style="left:777px">00:18</div><div class="rl" style="left:833px">00:20</div><div class="rl" style="left:888px">00:22</div><div class="rl" style="left:943px">00:24</div><div class="rl" style="left:999px">00:26</div>

<!-- tracks -->
<div class="row" style="top:345px;width:733px"></div>
<div class="row" style="top:371.5px;width:733px"></div>
<div class="row" style="top:398px;width:733px"></div>
<div class="row" style="top:424.5px;width:733px"></div>
<div class="row" style="top:451px;width:733px"></div>
<div class="row" style="top:477.5px;width:280px;border-radius:4px"></div>
<div class="row" style="top:504px;width:280px;border-radius:4px"></div>
<div class="ln" style="left:291px;top:370px;width:733px"></div>
<div class="ln" style="left:291px;top:396.5px;width:733px"></div>
<div class="ln" style="left:291px;top:423px;width:733px"></div>
<div class="ln" style="left:291px;top:449.5px;width:733px"></div>
<div class="ln" style="left:291px;top:476px;width:280px"></div>
<div class="ln" style="left:291px;top:502.5px;width:280px"></div>

<div class="dm" style="left:567px;top:342px"></div><div class="dm" style="left:639px;top:342px"></div><div class="dm" style="left:711px;top:342px"></div><div class="dm" style="left:783px;top:342px"></div><div class="dm" style="left:855px;top:342px"></div><div class="dm" style="left:925px;top:342px"></div><div class="dm" style="left:994px;top:342px"></div>
<div class="dm" style="left:567px;top:368px"></div><div class="dm" style="left:639px;top:368px"></div><div class="dm" style="left:711px;top:368px"></div><div class="dm" style="left:783px;top:368px"></div><div class="dm" style="left:855px;top:368px"></div><div class="dm" style="left:925px;top:368px"></div><div class="dm" style="left:994px;top:368px"></div>
<div class="dm" style="left:567px;top:394.5px"></div><div class="dm" style="left:639px;top:394.5px"></div><div class="dm" style="left:711px;top:394.5px"></div><div class="dm" style="left:783px;top:394.5px"></div><div class="dm" style="left:855px;top:394.5px"></div><div class="dm" style="left:925px;top:394.5px"></div><div class="dm" style="left:994px;top:394.5px"></div>
<div class="dm" style="left:567px;top:421px"></div><div class="dm" style="left:639px;top:421px"></div><div class="dm" style="left:711px;top:421px"></div><div class="dm" style="left:783px;top:421px"></div><div class="dm" style="left:855px;top:421px"></div><div class="dm" style="left:925px;top:421px"></div><div class="dm" style="left:994px;top:421px"></div>
<div class="dm" style="left:567px;top:447.5px"></div><div class="dm" style="left:639px;top:447.5px"></div><div class="dm" style="left:711px;top:447.5px"></div><div class="dm" style="left:783px;top:447.5px"></div><div class="dm" style="left:855px;top:447.5px"></div><div class="dm" style="left:925px;top:447.5px"></div><div class="dm" style="left:994px;top:447.5px"></div>
<div class="dm" style="left:567px;top:474px"></div>

<!-- row 1 -->
<div class="ai" style="left:299px;top:352px">A</div><div class="lb" style="left:313px;top:352px">C</div>
<div class="ai" style="left:579px;top:352px">A</div><div class="lb" style="left:592px;top:352px">A</div>
<div class="ai" style="left:651px;top:352px">A</div><div class="lb" style="left:664px;top:352px">B</div>
<div class="ai" style="left:723px;top:352px">A</div><div class="lb" style="left:736px;top:352px">C</div>
<div class="ai" style="left:795px;top:352px">A</div><div class="lb" style="left:808px;top:352px">D</div>
<div class="ai" style="left:867px;top:352px">A</div><div class="lb" style="left:880px;top:352px">E</div>
<div class="ai" style="left:936px;top:352px">A</div><div class="lb" style="left:949px;top:352px">F</div>
<div class="ai" style="left:1006px;top:352px">A</div><div class="lb" style="left:1019px;top:352px">G</div>
<!-- row 2 -->
<div class="ai" style="left:299px;top:379px">A</div><div class="lb" style="left:313px;top:379px">B</div>
<div class="ai" style="left:579px;top:379px">A</div><div class="lb" style="left:592px;top:379px;width:42px">Red and sweet</div>
<div class="ai" style="left:651px;top:379px">A</div><div class="lb" style="left:664px;top:379px;width:42px">for Ball</div>
<div class="ai" style="left:723px;top:379px">A</div><div class="lb" style="left:736px;top:379px;width:42px">for Cat</div>
<div class="ai" style="left:795px;top:379px">A</div><div class="lb" style="left:808px;top:379px;width:42px">for Dog</div>
<div class="ai" style="left:867px;top:379px">A</div><div class="lb" style="left:880px;top:379px;width:40px">for Elephant</div>
<div class="ai" style="left:936px;top:379px">A</div><div class="lb" style="left:949px;top:379px;width:40px">for Fish</div>
<div class="ai" style="left:1006px;top:379px">A</div><div class="lb" style="left:1019px;top:379px">for Goat</div>
<!-- row 3 -->
<div class="ai" style="left:299px;top:405px">A</div><div class="lb" style="left:313px;top:405px">A</div>
<div class="ai" style="left:579px;top:405px">A</div><div class="lb" style="left:592px;top:405px;width:42px">for Apple</div>
<div class="ai" style="left:651px;top:405px">A</div><div class="lb" style="left:664px;top:405px;width:42px">Roll with you</div>
<div class="ai" style="left:723px;top:405px">A</div><div class="lb" style="left:736px;top:405px;width:42px">Who says meow</div>
<div class="ai" style="left:795px;top:405px">A</div><div class="lb" style="left:808px;top:405px;width:42px">He barks all day</div>
<div class="ai" style="left:867px;top:405px">A</div><div class="lb" style="left:880px;top:405px;width:40px">Big and tall</div>
<div class="ai" style="left:936px;top:405px">A</div><div class="lb" style="left:949px;top:405px;width:40px">So tiny and</div>
<div class="ai" style="left:1006px;top:405px">A</div><div class="lb" style="left:1019px;top:405px">Me</div>
<!-- row 4 -->
<div class="ai" style="left:299px;top:432px">A</div><div class="lb" style="left:313px;top:432px">Rhyme Song</div>

<!-- playhead -->
<div class="a" style="left:313px;top:340px;width:1px;height:233px;background:#eef0ff"></div>
<div class="a" style="left:311px;top:334px;width:5px;height:11px;background:#c8c6c2;border:1px solid #fff;border-radius:1.5px"></div>

<!-- cursor -->
<svg class="a" style="left:372px;top:414px" width="18" height="26" viewBox="0 0 18 26"><path d="M3 2L3 19L7 15.5L10.5 23.5L14 22L10.5 14.5L15.5 14Z" fill="#fff" stroke="#23263f" stroke-width="1.4" stroke-linejoin="round"/></svg>

</div></body></html>
